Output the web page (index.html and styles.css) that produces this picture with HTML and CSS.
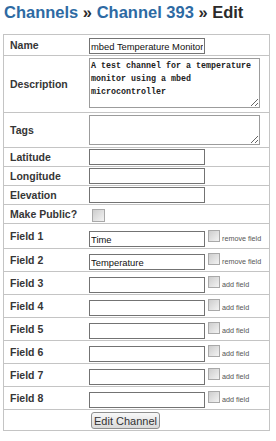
FILE: index.html
```html
<!DOCTYPE html>
<html lang="en">
<head>
    <meta charset="UTF-8">
    <meta name="viewport" content="width=device-width, initial-scale=1.0">
    <title>Edit Channel 393</title>
    <link rel="stylesheet" href="styles.css">
</head>
<body>
    <h1 class="crumbs"><a href="#">Channels</a> &raquo; <a href="#">Channel 393</a> &raquo; Edit</h1>

    <!-- Channel Form -->
    <form class="channel-form" onsubmit="return false;">
        <table class="channel-table">
            <tr class="row-name">
                <td class="label">Name</td>
                <td class="ctrl"><input type="text" class="text" value="mbed Temperature Monitor"></td>
            </tr>
            <tr class="row-desc">
                <td class="label">Description</td>
                <td class="ctrl"><textarea class="area area-desc">A test channel for a temperature monitor using a mbed microcontroller</textarea></td>
            </tr>
            <tr class="row-tags">
                <td class="label">Tags</td>
                <td class="ctrl"><textarea class="area area-tags"></textarea></td>
            </tr>
            <tr class="row-geo">
                <td class="label">Latitude</td>
                <td class="ctrl"><input type="text" class="text"></td>
            </tr>
            <tr class="row-geo">
                <td class="label">Longitude</td>
                <td class="ctrl"><input type="text" class="text"></td>
            </tr>
            <tr class="row-geo">
                <td class="label">Elevation</td>
                <td class="ctrl"><input type="text" class="text"></td>
            </tr>
            <tr class="row-public">
                <td class="label">Make Public?</td>
                <td class="ctrl"><input type="checkbox" class="check check-public"></td>
            </tr>
            <tr class="row-field first">
                <td class="label">Field 1</td>
                <td class="ctrl"><div class="field"><input type="text" class="text" value="Time"><input type="checkbox" class="check"><span class="hint">remove field</span></div></td>
            </tr>
            <tr class="row-field">
                <td class="label">Field 2</td>
                <td class="ctrl"><div class="field"><input type="text" class="text" value="Temperature"><input type="checkbox" class="check"><span class="hint">remove field</span></div></td>
            </tr>
            <tr class="row-field">
                <td class="label">Field 3</td>
                <td class="ctrl"><div class="field"><input type="text" class="text"><input type="checkbox" class="check"><span class="hint">add field</span></div></td>
            </tr>
            <tr class="row-field">
                <td class="label">Field 4</td>
                <td class="ctrl"><div class="field"><input type="text" class="text"><input type="checkbox" class="check"><span class="hint">add field</span></div></td>
            </tr>
            <tr class="row-field">
                <td class="label">Field 5</td>
                <td class="ctrl"><div class="field"><input type="text" class="text"><input type="checkbox" class="check"><span class="hint">add field</span></div></td>
            </tr>
            <tr class="row-field">
                <td class="label">Field 6</td>
                <td class="ctrl"><div class="field"><input type="text" class="text"><input type="checkbox" class="check"><span class="hint">add field</span></div></td>
            </tr>
            <tr class="row-field">
                <td class="label">Field 7</td>
                <td class="ctrl"><div class="field"><input type="text" class="text"><input type="checkbox" class="check"><span class="hint">add field</span></div></td>
            </tr>
            <tr class="row-field">
                <td class="label">Field 8</td>
                <td class="ctrl"><div class="field"><input type="text" class="text"><input type="checkbox" class="check"><span class="hint">add field</span></div></td>
            </tr>
            <tr class="row-submit">
                <td class="label"></td>
                <td class="ctrl"><button type="submit" class="submit">Edit Channel</button></td>
            </tr>
        </table>
    </form>
</body>
</html>
```

FILE: styles.css
```css
body {
    margin: 0;
    padding: 1px 3px 0;
    font-family: Arial, 'Liberation Sans', sans-serif;
    color: #333;
    background-color: #fff;
}
.crumbs {
    margin: 0 0 11px 1px;
    font-size: 16.5px;
    line-height: 22px;
    font-weight: bold;
    color: #2b2b2b;
}
.crumbs a {
    color: #2d6aa3;
    text-decoration: none;
}
.channel-form {
    margin: 0;
}
.channel-table {
    width: 267px;
    table-layout: fixed;
    border-collapse: separate;
    border-spacing: 0;
    border: 1px solid #c4c4c4;
}
.channel-table td {
    padding: 0;
    border-top: 1px solid #c4c4c4;
}
.channel-table tr:first-child td {
    border-top: none;
}
.label {
    box-sizing: border-box;
    width: 85px;
    padding-left: 6px !important;
    font-size: 10.5px;
    font-weight: bold;
    color: #363636;
    vertical-align: middle;
    white-space: nowrap;
}
.ctrl {
    vertical-align: top;
}
.text {
    display: block;
    box-sizing: border-box;
    width: 116px;
    height: 16px;
    margin: 0;
    padding: 0 1px;
    border: 1px solid #737373;
    font-family: Arial, 'Liberation Sans', sans-serif;
    font-size: 9.4px;
    color: #111;
    background: #fff;
}
.area {
    display: block;
    box-sizing: border-box;
    width: 171px;
    margin: 0;
    padding: 1px;
    border: 1px solid #9c9c9c;
    font-family: 'Liberation Mono', 'Courier New', monospace;
    font-size: 8.33px;
    font-weight: bold;
    line-height: 13px;
    color: #222;
}
.area-desc {
    height: 50px;
    padding-top: 1px;
}
.area-tags {
    height: 30px;
}
.row-name .ctrl {
    padding: 3px 0 1px;
}
.row-desc .ctrl {
    padding: 2px 0 4px;
}
.row-tags .ctrl {
    padding: 2px 0 2px;
}
.row-geo .ctrl {
    padding: 1px 0 1px;
}
.row-public .ctrl {
    padding: 4px 0 1px;
}
.row-field .ctrl {
    padding: 5px 0 1px;
}
.row-field.first .ctrl {
    padding-top: 7px;
}
.row-submit .ctrl {
    padding: 2px 0 1px;
}
.field {
    display: flex;
    align-items: flex-start;
}
.check {
    -webkit-appearance: none;
    appearance: none;
    display: block;
    box-sizing: border-box;
    width: 12px;
    height: 12px;
    margin: -1px 0 0 3px;
    border: 1px solid #a9a9a9;
    background: linear-gradient(135deg, #cdcdcd, #f3f3f3);
}
.check-public {
    width: 13px;
    height: 13px;
    margin: 0 0 0 3px;
}
.hint {
    margin: 3px 0 0 2px;
    font-family: Arial, 'Liberation Sans', sans-serif;
    font-size: 7.2px;
    line-height: 9px;
    color: #555;
    white-space: nowrap;
}
.submit {
    display: block;
    box-sizing: border-box;
    width: 69px;
    height: 17px;
    margin: 0 0 0 2px;
    padding: 0;
    border: 1px solid #8e8e8e;
    border-radius: 3px;
    background: linear-gradient(#f8f8f8, #dadada);
    font-family: Arial, 'Liberation Sans', sans-serif;
    font-size: 11px;
    color: #333;
    cursor: pointer;
}
```
